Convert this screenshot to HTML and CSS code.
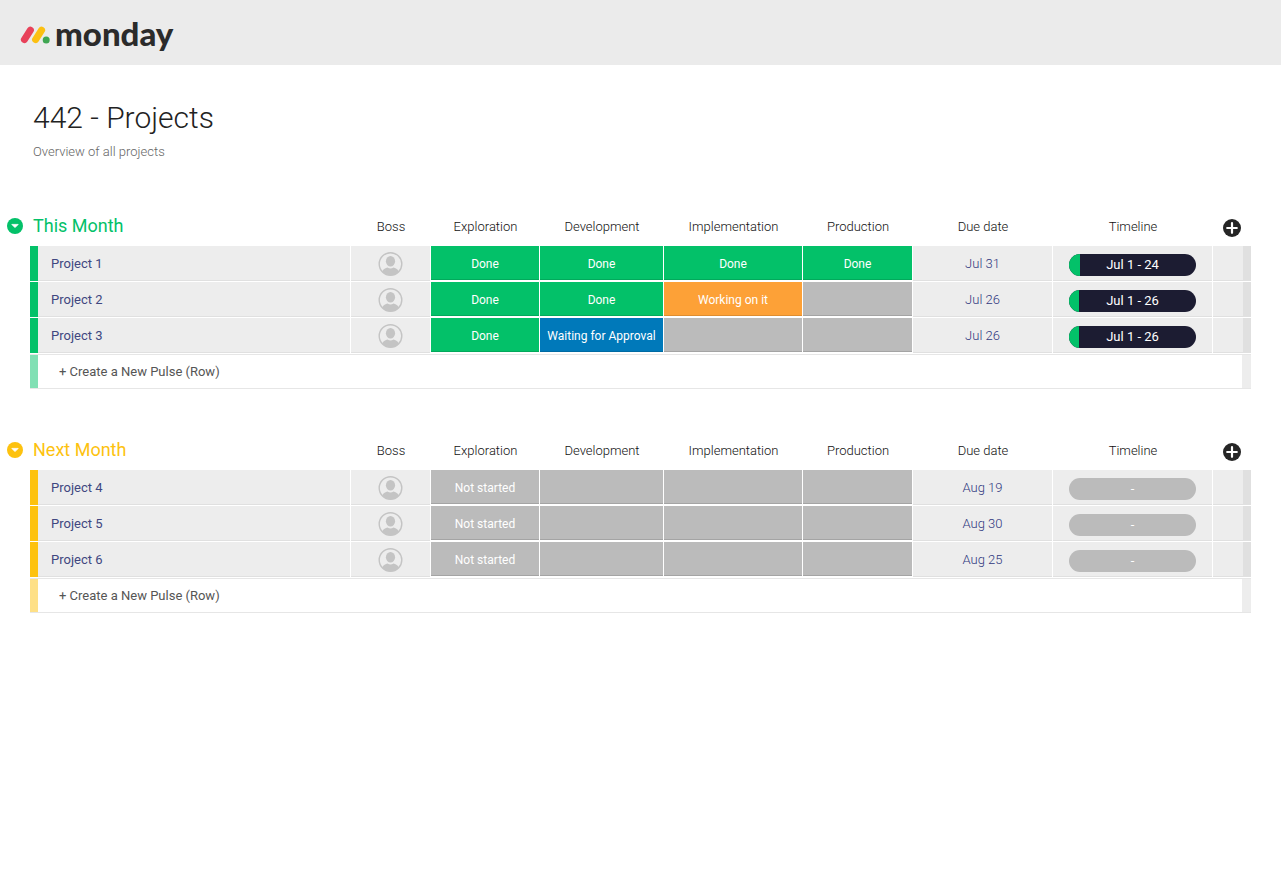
FILE: index.html
```html
<!DOCTYPE html>
<html lang="en">

<head>
    <meta charset="UTF-8">
    <meta name="viewport" content="width=device-width, initial-scale=1.0">
    <title>442 - Projects</title>
    <link rel="stylesheet" href="styles.css">
</head>

<body>
    <svg class="icons" aria-hidden="true">
        <symbol id="person" viewBox="0 0 26 26">
            <circle cx="12.5" cy="13" r="11.3" fill="none" stroke="#c4c4c4" stroke-width="1.4" />
            <ellipse cx="12.5" cy="10.3" rx="4.6" ry="5.3" fill="#c4c4c4" />
            <path d="M4.1 20.4C5.5 17.8 7.5 17.2 9.5 16.6q3 2 6 0c2 .6 4 1.2 5.4 3.8A11.3 11.3 0 0 1 4.1 20.4z" fill="#c4c4c4" />
        </symbol>
        <symbol id="arrow" viewBox="0 0 16 16">
            <circle cx="8" cy="8" r="8" fill="currentColor" />
            <path d="M4.8 6.4h6.4L8 9.6z" fill="#fff" stroke="#fff" stroke-width=".8" stroke-linejoin="round" />
        </symbol>
        <symbol id="plus" viewBox="0 0 18 18">
            <circle cx="9" cy="9" r="9" fill="#262626" />
            <path d="M9 4.2v9.6M4.2 9h9.6" stroke="#fff" stroke-width="2.2" stroke-linecap="round" />
        </symbol>
    </svg>

    <header class="topbar">
        <a class="logo" href="#">
            <svg class="logo-mark" viewBox="0 0 30 18" aria-hidden="true">
                <path d="M4.4 13.6L10.4 4.2" stroke="#e8425a" stroke-width="7" stroke-linecap="round" />
                <path d="M15.6 13.6L21.6 4.2" stroke="#fcc012" stroke-width="7" stroke-linecap="round" />
                <circle cx="26.2" cy="14" r="3.5" fill="#3fa652" />
            </svg>
            <span class="logo-text">monday</span>
        </a>
    </header>

    <main>
        <h1>442 - Projects</h1>
        <p class="description">Overview of all projects</p>

        <!-- this month -->
        <table class="group green">
            <thead>
                <tr>
                    <th class="col-name">
                        <div class="group-title">
                            <button class="toggle" aria-label="Collapse This Month"><svg><use href="#arrow" /></svg></button>
                            <h2>This Month</h2>
                        </div>
                    </th>
                    <th class="col-boss">Boss</th>
                    <th class="col-exploration">Exploration</th>
                    <th class="col-development">Development</th>
                    <th class="col-implementation">Implementation</th>
                    <th class="col-production">Production</th>
                    <th class="col-date">Due date</th>
                    <th class="col-timeline">Timeline</th>
                    <th class="col-add"><button class="add-column" aria-label="Add column"><svg><use href="#plus" /></svg></button></th>
                </tr>
            </thead>
            <tbody>
                <tr>
                    <td class="name">Project 1</td>
                    <td><svg class="person"><use href="#person" /></svg></td>
                    <td class="status done">Done</td>
                    <td class="status done">Done</td>
                    <td class="status done">Done</td>
                    <td class="status done">Done</td>
                    <td class="date">Jul 31</td>
                    <td class="timeline"><div class="pill"><div class="progress" style="width: 9%"></div><span>Jul 1 - 24</span></div></td>
                    <td class="end"></td>
                </tr>
                <tr>
                    <td class="name">Project 2</td>
                    <td><svg class="person"><use href="#person" /></svg></td>
                    <td class="status done">Done</td>
                    <td class="status done">Done</td>
                    <td class="status working">Working on it</td>
                    <td class="status"></td>
                    <td class="date">Jul 26</td>
                    <td class="timeline"><div class="pill"><div class="progress" style="width: 8%"></div><span>Jul 1 - 26</span></div></td>
                    <td class="end"></td>
                </tr>
                <tr>
                    <td class="name">Project 3</td>
                    <td><svg class="person"><use href="#person" /></svg></td>
                    <td class="status done">Done</td>
                    <td class="status waiting">Waiting for Approval</td>
                    <td class="status"></td>
                    <td class="status"></td>
                    <td class="date">Jul 26</td>
                    <td class="timeline"><div class="pill"><div class="progress" style="width: 8%"></div><span>Jul 1 - 26</span></div></td>
                    <td class="end"></td>
                </tr>
            </tbody>
            <tfoot>
                <tr>
                    <td class="create" colspan="9"><button>+ Create a New Pulse (Row)</button></td>
                </tr>
            </tfoot>
        </table>

        <!-- next month -->
        <table class="group yellow">
            <thead>
                <tr>
                    <th class="col-name">
                        <div class="group-title">
                            <button class="toggle" aria-label="Collapse Next Month"><svg><use href="#arrow" /></svg></button>
                            <h2>Next Month</h2>
                        </div>
                    </th>
                    <th class="col-boss">Boss</th>
                    <th class="col-exploration">Exploration</th>
                    <th class="col-development">Development</th>
                    <th class="col-implementation">Implementation</th>
                    <th class="col-production">Production</th>
                    <th class="col-date">Due date</th>
                    <th class="col-timeline">Timeline</th>
                    <th class="col-add"><button class="add-column" aria-label="Add column"><svg><use href="#plus" /></svg></button></th>
                </tr>
            </thead>
            <tbody>
                <tr>
                    <td class="name">Project 4</td>
                    <td><svg class="person"><use href="#person" /></svg></td>
                    <td class="status">Not started</td>
                    <td class="status"></td>
                    <td class="status"></td>
                    <td class="status"></td>
                    <td class="date">Aug 19</td>
                    <td class="timeline"><div class="pill empty"><span>-</span></div></td>
                    <td class="end"></td>
                </tr>
                <tr>
                    <td class="name">Project 5</td>
                    <td><svg class="person"><use href="#person" /></svg></td>
                    <td class="status">Not started</td>
                    <td class="status"></td>
                    <td class="status"></td>
                    <td class="status"></td>
                    <td class="date">Aug 30</td>
                    <td class="timeline"><div class="pill empty"><span>-</span></div></td>
                    <td class="end"></td>
                </tr>
                <tr>
                    <td class="name">Project 6</td>
                    <td><svg class="person"><use href="#person" /></svg></td>
                    <td class="status">Not started</td>
                    <td class="status"></td>
                    <td class="status"></td>
                    <td class="status"></td>
                    <td class="date">Aug 25</td>
                    <td class="timeline"><div class="pill empty"><span>-</span></div></td>
                    <td class="end"></td>
                </tr>
            </tbody>
            <tfoot>
                <tr>
                    <td class="create" colspan="9"><button>+ Create a New Pulse (Row)</button></td>
                </tr>
            </tfoot>
        </table>
    </main>
</body>

</html>
```

FILE: styles.css
```css
* {
    box-sizing: border-box;
}

body {
    margin: 0;
    background-color: #fff;
    font-family: Roboto, "Liberation Sans", sans-serif;
    font-size: 13px;
    color: #333;
}

button {
    padding: 0;
    border: none;
    background: none;
    font: inherit;
    color: inherit;
    cursor: pointer;
}

.icons {
    display: none;
}

/* top bar */
.topbar {
    display: flex;
    align-items: center;
    height: 65px;
    padding: 0 20px;
    background-color: #ebebeb;
}

.logo {
    display: flex;
    align-items: center;
    gap: 5px;
    color: #2b2b2b;
    text-decoration: none;
}

.logo-mark {
    width: 30px;
    height: 18px;
    margin-top: 4px;
}

.logo-text {
    font-family: Lato, sans-serif;
    font-size: 33px;
    font-weight: 900;
    line-height: 40px;
}

main {
    padding: 33px 30px;
}

h1 {
    margin: 0;
    padding-left: 3px;
    font-size: 30px;
    font-weight: 300;
    line-height: 40px;
    color: #222;
}

.description {
    margin: 5px 0 46px;
    padding-left: 3px;
    line-height: 18px;
    font-weight: 300;
    color: #666;
}

/* groups */
.group {
    width: 100%;
    margin-bottom: 41px;
    table-layout: fixed;
    border-spacing: 0;
}

.green {
    --main: #03c169;
    --light: #81e0b4;
}

.yellow {
    --main: #fdc20f;
    --light: #fee087;
}

.group th {
    height: 39px;
    padding: 0;
    font-weight: 300;
    text-align: center;
    color: #111;
}

.col-boss {
    width: 80px;
}

.col-exploration {
    width: 109px;
}

.col-development {
    width: 124px;
}

.col-implementation {
    width: 139px;
}

.col-production {
    width: 110px;
}

.col-date {
    width: 140px;
}

.col-timeline {
    width: 160px;
}

.col-add {
    width: 38px;
}

/* the toggle hangs in the page margin, left of the table */
.group-title {
    display: flex;
    align-items: center;
    gap: 10px;
    margin-left: -23px;
    padding-bottom: 2px;
    color: var(--main);
}

.group-title h2 {
    margin: 0;
    font-size: 18px;
    font-weight: 400;
    line-height: 24px;
}

.toggle,
.toggle svg {
    display: block;
    width: 16px;
    height: 16px;
}

.add-column,
.add-column svg {
    display: block;
    width: 18px;
    height: 18px;
}

.add-column {
    margin: 2px auto 0;
}

/* rows */
.group tbody td {
    height: 36px;
    padding: 0;
    border-right: 1px solid #fff;
    border-bottom: 1px solid #fff;
    background-color: #ededed;
    box-shadow: inset 0 -1px #e0e0e0;
    text-align: center;
}

.group tbody .name {
    padding-left: 21px;
    box-shadow: inset 8px 0 var(--main), inset 0 -1px #e0e0e0;
    text-align: left;
    color: #404780;
}

.group tbody .date {
    font-weight: 300;
    color: #303880;
}

.person {
    display: block;
    width: 26px;
    height: 26px;
    margin: 0 auto;
}

.group tbody .status {
    padding-top: 2px;
    border-bottom-width: 2px;
    background-color: #bbb;
    box-shadow: inset 0 -1px rgba(0, 0, 0, 0.12);
    font-size: 12px;
    color: #fff;
    white-space: nowrap;
}

.group tbody .done {
    background-color: #03c169;
}

.group tbody .working {
    background-color: #fda137;
}

.group tbody .waiting {
    background-color: #0079ba;
}

.group tbody .timeline {
    padding: 3px 16px 0;
}

.pill {
    position: relative;
    height: 22px;
    border-radius: 11px;
    background-color: #1c1c32;
    line-height: 22px;
    color: #fff;
    overflow: hidden;
}

.pill.empty {
    background-color: #bbb;
}

.pill span {
    position: relative;
}

.progress {
    position: absolute;
    top: 0;
    bottom: 0;
    left: 0;
    background-color: #03c169;
}

.group tbody .end {
    border-right: none;
    box-shadow: inset -8px 0 #e0e0e0, inset 0 -1px #e0e0e0;
}

/* create row */
.create {
    padding: 0 0 1px;
}

.create button {
    display: block;
    width: 100%;
    height: 35px;
    padding-left: 29px;
    border-top: 1px solid #e6e6e6;
    border-bottom: 1px solid #e6e6e6;
    box-shadow: inset 8px 0 var(--light), inset -9px 0 #ededed;
    text-align: left;
    color: #555;
}
```
